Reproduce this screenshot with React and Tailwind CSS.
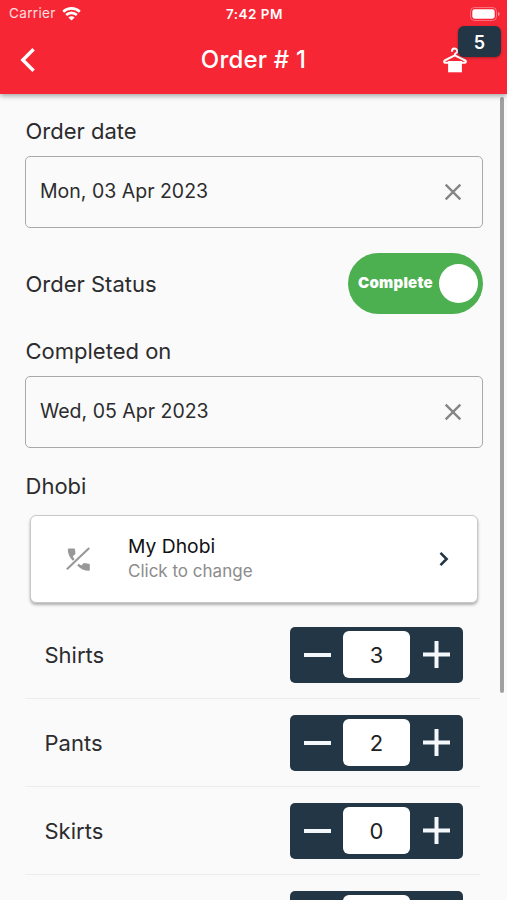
import { useState } from 'react';
import { MdClose } from 'react-icons/md';

const initialItems = [
  { name: 'Shirts', count: 3 },
  { name: 'Pants', count: 2 },
  { name: 'Skirts', count: 0 },
  { name: 'Sarees', count: 0 },
];

function HangerIcon({ className }) {
  return (
    <svg className={className} viewBox="0 0 24 26" fill="none" stroke="currentColor" strokeWidth="2" strokeLinecap="round" strokeLinejoin="round">
      <path d="M9 4a2.600 2.600 0 1 1 3.700 2.400c-.6.300-.9.700-.9 1.500v.5L1.700 13.500c-1 .7-.6 2.300.7 2.300h19.200c1.300 0 1.700-1.600.7-2.300L11.800 8.400" />
      <path d="M5.100 14h13.800v11.300H5.100z" fill="currentColor" stroke="none" />
    </svg>
  );
}

function PhoneOffIcon({ className }) {
  return (
    <svg className={className} viewBox="0 0 24 24" fill="currentColor">
      <path d="M1.800 2.500q0-1.100 1.100-1.100h5q1 0 1.100 1l.5 4.400-2.700 2.600 1.700 2.900-1.600 1.500C3.600 10.400 1.800 6.600 1.800 2.500z" />
      <path d="M11.200 18.400l1.500-1.600 2.700 1.600 2.400-2.400 5 .7q1 .1 1 1.100v4.900q0 1.100-1.100 1.100c-4.300 0-8.200-1.900-11.500-5.400z" />
      <path d="M.9 22.300 23.200.9" stroke="currentColor" strokeWidth="2.100" />
    </svg>
  );
}

function StatusBar() {
  return (
    <div className="grid h-[27px] grid-cols-3 items-center pr-[7px] pl-[9px] text-[13.5px]">
      <div className="flex items-center gap-[6px] text-white/85">
        <span className="tracking-[0.35px]">Carrier</span>
        <svg className="h-[14px] w-[19px] text-white" viewBox="0 0 19 14" fill="none" stroke="currentColor" strokeWidth="2.6">
          <path d="M1.200 4.700a12 12 0 0 1 16.600 0" />
          <path d="M4.200 8a7.600 7.600 0 0 1 10.600 0" />
          <path d="M9.500 13.600 6.400 10.600a4.400 4.400 0 0 1 6.200 0z" fill="currentColor" stroke="none" />
        </svg>
      </div>
      <span className="pt-[1px] text-center font-semibold tracking-[0.5px] whitespace-nowrap">7:42 PM</span>
      <svg className="h-[14px] w-[30px] justify-self-end" viewBox="0 0 30 14">
        <rect x="0.5" y="0.5" width="26" height="13" rx="4" fill="none" stroke="white" strokeOpacity="0.35" />
        <rect x="2.300" y="2.300" width="22.400" height="9.400" rx="2.400" fill="white" />
        <path d="M28 5v4c1-.4 1.600-1.100 1.600-2S29 5.400 28 5z" fill="white" fillOpacity="0.5" />
      </svg>
    </div>
  );
}

function Header({ count }) {
  return (
    <header className="relative z-10 h-[94px] shrink-0 bg-[#f72635] text-white shadow-[0_2px_5px_rgba(0,0,0,0.35)]">
      <StatusBar />
      <div className="grid h-[66px] grid-cols-3 items-center">
        <svg className="ml-[20px] h-6 w-4" viewBox="0 0 16 24" fill="none" stroke="currentColor" strokeWidth="3.400">
          <path d="M13.600 1.200 2.800 12l10.800 10.800" />
        </svg>
        <h1 className="text-center text-[24px] font-medium tracking-[0.2px] whitespace-nowrap">Order # 1</h1>
        <div className="relative mr-[40px] justify-self-end">
          <HangerIcon className="h-[26px] w-[24px]" />
          <span className="absolute -top-[21px] left-[15px] flex h-[31px] w-[43px] items-center justify-center rounded-[6px] bg-[#223645] pt-[2px] text-[18px] font-semibold shadow-[0_1px_3px_rgba(0,0,0,0.3)]">
            {count}
          </span>
        </div>
      </div>
    </header>
  );
}

function Label({ children }) {
  return <div className="h-[30px] pl-[0.5px] text-[22px] leading-[30px]">{children}</div>;
}

function DateField({ value }) {
  return (
    <div className="mt-[10px] flex h-[72px] items-center justify-between rounded-[5px] border border-[#a9a9a9] pr-[15px] pl-[14px]">
      <span className="text-[19.5px]">{value}</span>
      <MdClose className="h-[28px] w-[28px] text-[#858585]" />
    </div>
  );
}

function Stepper({ value, onChange }) {
  return (
    <div className="flex h-[56px] w-[173px] items-center rounded-[5px] bg-[#223645]">
      <button className="flex h-full w-[53px] items-center justify-center pl-[1px]" onClick={() => onChange(value - 1)}>
        <span className="h-[4px] w-[27px] bg-[#f5f8fb]"></span>
      </button>
      <span className="flex h-[47px] w-[67px] items-center justify-center rounded-[6px] bg-white pt-[1px] text-[22px] text-[#222]">
        {value}
      </span>
      <button className="flex h-full w-[53px] items-center justify-center pr-[1px]" onClick={() => onChange(value + 1)}>
        <svg className="h-[27px] w-[27px]" viewBox="0 0 27 27" stroke="#f5f8fb" strokeWidth="4">
          <path d="M0 13.500h27M13.500 0v27" />
        </svg>
      </button>
    </div>
  );
}

export default function App() {
  const [items, setItems] = useState(initialItems);
  const [complete, setComplete] = useState(true);

  const total = items.reduce((sum, item) => sum + item.count, 0);

  const updateCount = (index, count) => {
    setItems(items.map((item, i) => (i === index ? { ...item, count: Math.max(0, count) } : item)));
  };

  return (
    <div className="relative flex h-[900px] w-[507px] flex-col overflow-hidden bg-[#fafafa] font-['Inter',sans-serif] text-[#2c2c2e]">
      <Header count={total} />

      <main className="flex-1 overflow-hidden pt-[22px] pr-[24px] pl-[25px]">
        <Label>Order date</Label>
        <DateField value="Mon, 03 Apr 2023" />

        {/* Order status */}
        <div className="mt-[25px] flex h-[61px] items-center justify-between">
          <Label>Order Status</Label>
          <button
            className="flex h-[61px] w-[135px] items-center justify-between rounded-full bg-[#4caf50] pr-[5px] pl-[10px]"
            onClick={() => setComplete(!complete)}
          >
            <span className="text-[15px] font-black tracking-[0.25px] text-white">
              {complete ? 'Complete' : 'Pending'}
            </span>
            <span className="h-[39px] w-[39px] rounded-full bg-white"></span>
          </button>
        </div>

        <div className="mt-[22px]">
          <Label>Completed on</Label>
          <DateField value="Wed, 05 Apr 2023" />
        </div>

        {/* Dhobi */}
        <div className="mt-[23px]">
          <Label>Dhobi</Label>
          <div className="mt-[14px] mr-[5px] ml-[5px] flex h-[88px] items-center rounded-[6px] border border-[#c8c8c8] bg-white pr-[24px] pl-[35px] shadow-[0_2px_3px_rgba(0,0,0,0.3)]">
            <PhoneOffIcon className="h-[24px] w-[24px] text-[#989898]" />
            <div className="ml-[38px] flex-1">
              <div className="text-[19.300px] leading-[25px] text-[#111]">My Dhobi</div>
              <div className="text-[17px] leading-[25px] text-[#8c8c8c]">Click to change</div>
            </div>
            <svg className="h-[16px] w-[18px]" viewBox="0 0 18 16" fill="none" stroke="#223645" strokeWidth="2.600">
              <path d="M5.500 1.800 11.600 8l-6.100 6.200" />
            </svg>
          </div>
        </div>

        {/* Clothes */}
        <div className="mt-[8px]">
          {items.map((item, index) => (
            <div key={item.name} className="mr-[3px] flex h-[88px] items-center justify-between border-b border-[#ececec] pr-[17px] pl-[19px]">
              <Label>{item.name}</Label>
              <Stepper value={item.count} onChange={(count) => updateCount(index, count)} />
            </div>
          ))}
        </div>
      </main>

      {/* Scroll indicator */}
      <div className="absolute top-[97px] right-[3px] h-[596px] w-[4px] rounded-full bg-[#a0a0a0]"></div>
    </div>
  );
}
